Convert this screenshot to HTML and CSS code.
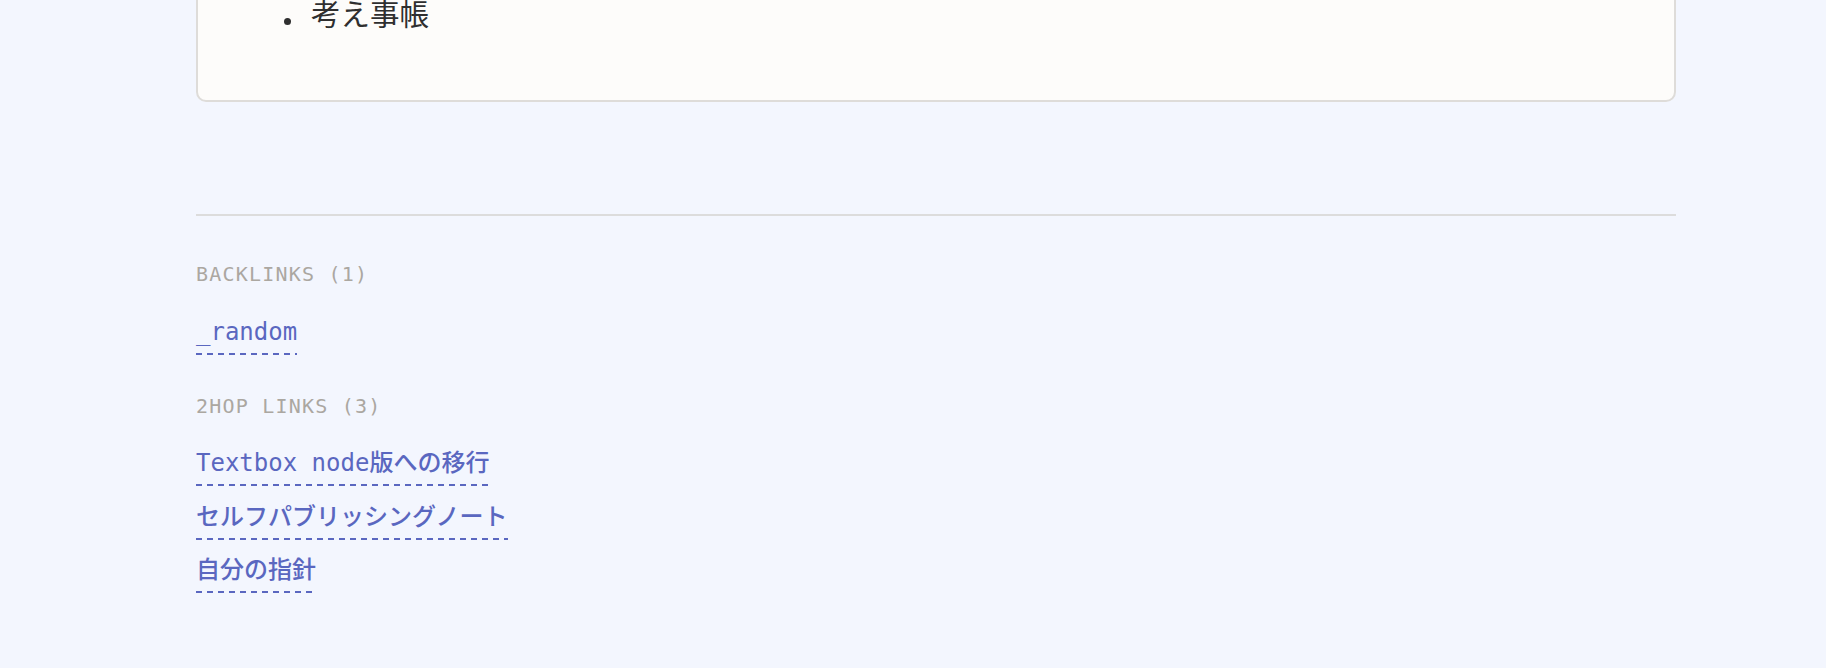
FILE: index.html
```html
<!DOCTYPE html>
<html lang="ja">
<head>
<meta charset="utf-8">
<title>考え事帳</title>
<link rel="stylesheet" href="styles.css">
</head>
<body>
<div class="page">
  <article class="card">
    <ul class="note-list">
      <li class="note-item">考え事帳</li>
    </ul>
  </article>
  <hr class="divider">
  <section class="links">
    <h2 class="links-title">BACKLINKS (1)</h2>
    <ul class="link-list">
      <li class="link-item"><a class="link" href="#">_random</a></li>
    </ul>
    <h2 class="links-title">2HOP LINKS (3)</h2>
    <ul class="link-list">
      <li class="link-item"><a class="link" href="#">Textbox node版への移行</a></li>
      <li class="link-item"><a class="link" href="#">セルフパブリッシングノート</a></li>
      <li class="link-item"><a class="link" href="#">自分の指針</a></li>
    </ul>
  </section>
</div>
</body>
</html>
```

FILE: styles.css
```css
html, body {
  margin: 0;
  padding: 0;
  background: #f3f6fe;
}

body {
  font-family: "Noto Sans CJK JP", "Noto Sans", sans-serif;
  color: #2b2b2b;
  overflow: hidden;
}

.page {
  width: 1480px;
  padding-left: 196px;
}

.card {
  margin-top: -58px;
  background: #fdfcfa;
  border: 2px solid #dedcd9;
  border-radius: 10px;
  padding: 45px 0 65px 0;
}

.note-list {
  list-style: none;
  margin: 0;
  padding: 0 0 0 86px;
}

.note-item {
  display: flex;
  align-items: baseline;
  font-size: 29.5px;
  line-height: 46px;
  color: #2f2f2f;
}

.note-item::before {
  content: "";
  width: 7px;
  height: 7px;
  border-radius: 50%;
  background: #2f2f2f;
  margin-right: 20px;
  flex: none;
}

.divider {
  margin: 112px 0 0 0;
  border: 0;
  height: 2px;
  background: #dcdcdc;
}

.links {
  padding-top: 7px;
  font-family: "DejaVu Sans Mono", "Noto Sans CJK JP", monospace;
}

.links-title {
  margin: 36px 0 24.5px 0;
  font-size: 20px;
  line-height: 30px;
  font-weight: normal;
  letter-spacing: 1.2px;
  color: #aba7a1;
}

.link-list {
  list-style: none;
  margin: 0;
  padding: 0;
  display: flex;
  flex-direction: column;
  align-items: flex-start;
  gap: 12.5px;
}

.link-item {
  display: block;
}

.link {
  display: inline-block;
  font-size: 24px;
  line-height: 36px;
  font-weight: 500;
  padding-bottom: 5px;
  color: #5a67c0;
  text-decoration: none;
  background-image: repeating-linear-gradient(to right, #5a67c0 0 6px, transparent 6px 11px);
  background-repeat: no-repeat;
  background-position: left bottom;
  background-size: 100% 2px;
}
```
